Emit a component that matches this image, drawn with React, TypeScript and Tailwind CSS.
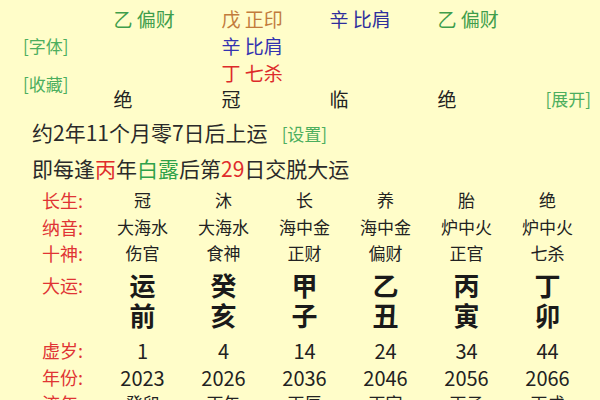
// Bazi chart screen: hidden stems, start-of-luck notes and the big luck table

const STEMS: { text: string; color: string }[][] = [
  [{ text: '乙 偏财', color: 'text-[#3f9d4c]' }],
  [
    { text: '戊 正印', color: 'text-[#c27b3c]' },
    { text: '辛 比肩', color: 'text-[#3333b0]' },
    { text: '丁 七杀', color: 'text-[#dd2a2a]' },
  ],
  [{ text: '辛 比肩', color: 'text-[#2e2e9c]' }],
  [{ text: '乙 偏财', color: 'text-[#3f9d4c]' }],
];

const STAGES = ['绝', '冠', '临', '绝'];

const SMALL_ROWS: { label: string; cells: string[] }[] = [
  { label: '长生', cells: ['冠', '沐', '长', '养', '胎', '绝'] },
  { label: '纳音', cells: ['大海水', '大海水', '海中金', '海中金', '炉中火', '炉中火'] },
  { label: '十神', cells: ['伤官', '食神', '正财', '偏财', '正官', '七杀'] },
];

const LUCK = [
  ['运', '前'],
  ['癸', '亥'],
  ['甲', '子'],
  ['乙', '丑'],
  ['丙', '寅'],
  ['丁', '卯'],
];

const BOTTOM_ROWS: { label: string; cells: string[]; size: string }[] = [
  { label: '虚岁', cells: ['1', '4', '14', '24', '34', '44'], size: 'text-[20px]' },
  { label: '年份', cells: ['2023', '2026', '2036', '2046', '2056', '2066'], size: 'text-[20px]' },
  { label: '流年', cells: ['癸卯', '丙午', '丙辰', '丙寅', '丙子', '丙戌'], size: 'text-[17px]' },
];

function Label({ text }: { text: string }) {
  return <span className="text-left text-[18px] text-[#e03434]">{text}:</span>;
}

export default function App() {
  return (
    <div className="w-[600px] h-[400px] overflow-hidden bg-[#fffdc9] text-[#222] font-['Noto_Sans_CJK_SC','Noto_Sans',sans-serif]">
      {/* Hidden stems */}
      <div className="flex items-start pt-[4.5px]">
        <div className="w-[116px] pl-[23px] flex flex-col text-[17px] leading-[27px] text-[#4cae5e]">
          <span className="mt-[27px]">[字体]</span>
          <span className="mt-[11px]">[收藏]</span>
        </div>

        <div className="flex-1 flex flex-col">
          <div className="grid grid-cols-[repeat(4,108px)] h-[81px] text-[19px] leading-[27px]">
            {STEMS.map((col, i) => (
              <div key={i} className="flex flex-col">
                {col.map((s, j) => (
                  <span key={j} className={s.color}>{s.text}</span>
                ))}
              </div>
            ))}
          </div>
          <div className="flex items-center h-[27px]">
            <div className="grid grid-cols-[repeat(4,108px)] text-[19px]">
              {STAGES.map((s, i) => (
                <span key={i}>{s}</span>
              ))}
            </div>
            <span className="flex-1 text-right whitespace-nowrap pr-[9px] text-[17px] text-[#4cae5e]">[展开]</span>
          </div>
        </div>
      </div>

      {/* Start of luck */}
      <div className="mt-[2.5px] pl-[32px] text-[21px] leading-[34px] text-[#2a2a2a]">
        <div>
          约2年11个月零7日后上运
          <span className="ml-[14px] text-[17px] text-[#4cae5e]">[设置]</span>
        </div>
        <div>
          即每逢<span className="text-[#e02c2c]">丙</span>年
          <span className="text-[#2fa24a]">白露</span>后第
          <span className="text-[#e02c2c]">29</span>日交脱大运
        </div>
      </div>

      {/* Luck table */}
      <div className="mt-[2px] pl-[42px]">
        {SMALL_ROWS.map(row => (
          <div key={row.label} className="grid grid-cols-[60px_repeat(6,81px)] leading-[26.5px]">
            <Label text={row.label} />
            {row.cells.map((c, i) => (
              <span key={i} className="text-center text-[17px]">{c}</span>
            ))}
          </div>
        ))}

        <div className="grid grid-cols-[60px_repeat(6,81px)] mt-[3px] leading-[30px]">
          <Label text="大运" />
          {LUCK.map(([top, bottom], i) => (
            <div key={i} className="flex flex-col items-center text-[26px] font-bold text-[#1a1a1a]">
              <span>{top}</span>
              <span>{bottom}</span>
            </div>
          ))}
        </div>

        <div className="mt-[6px]">
          {BOTTOM_ROWS.map(row => (
            <div key={row.label} className="grid grid-cols-[60px_repeat(6,81px)] items-center h-[27px]">
              <Label text={row.label} />
              {row.cells.map((c, i) => (
                <span key={i} className={`text-center ${row.size}`}>{c}</span>
              ))}
            </div>
          ))}
        </div>
      </div>
    </div>
  );
}
